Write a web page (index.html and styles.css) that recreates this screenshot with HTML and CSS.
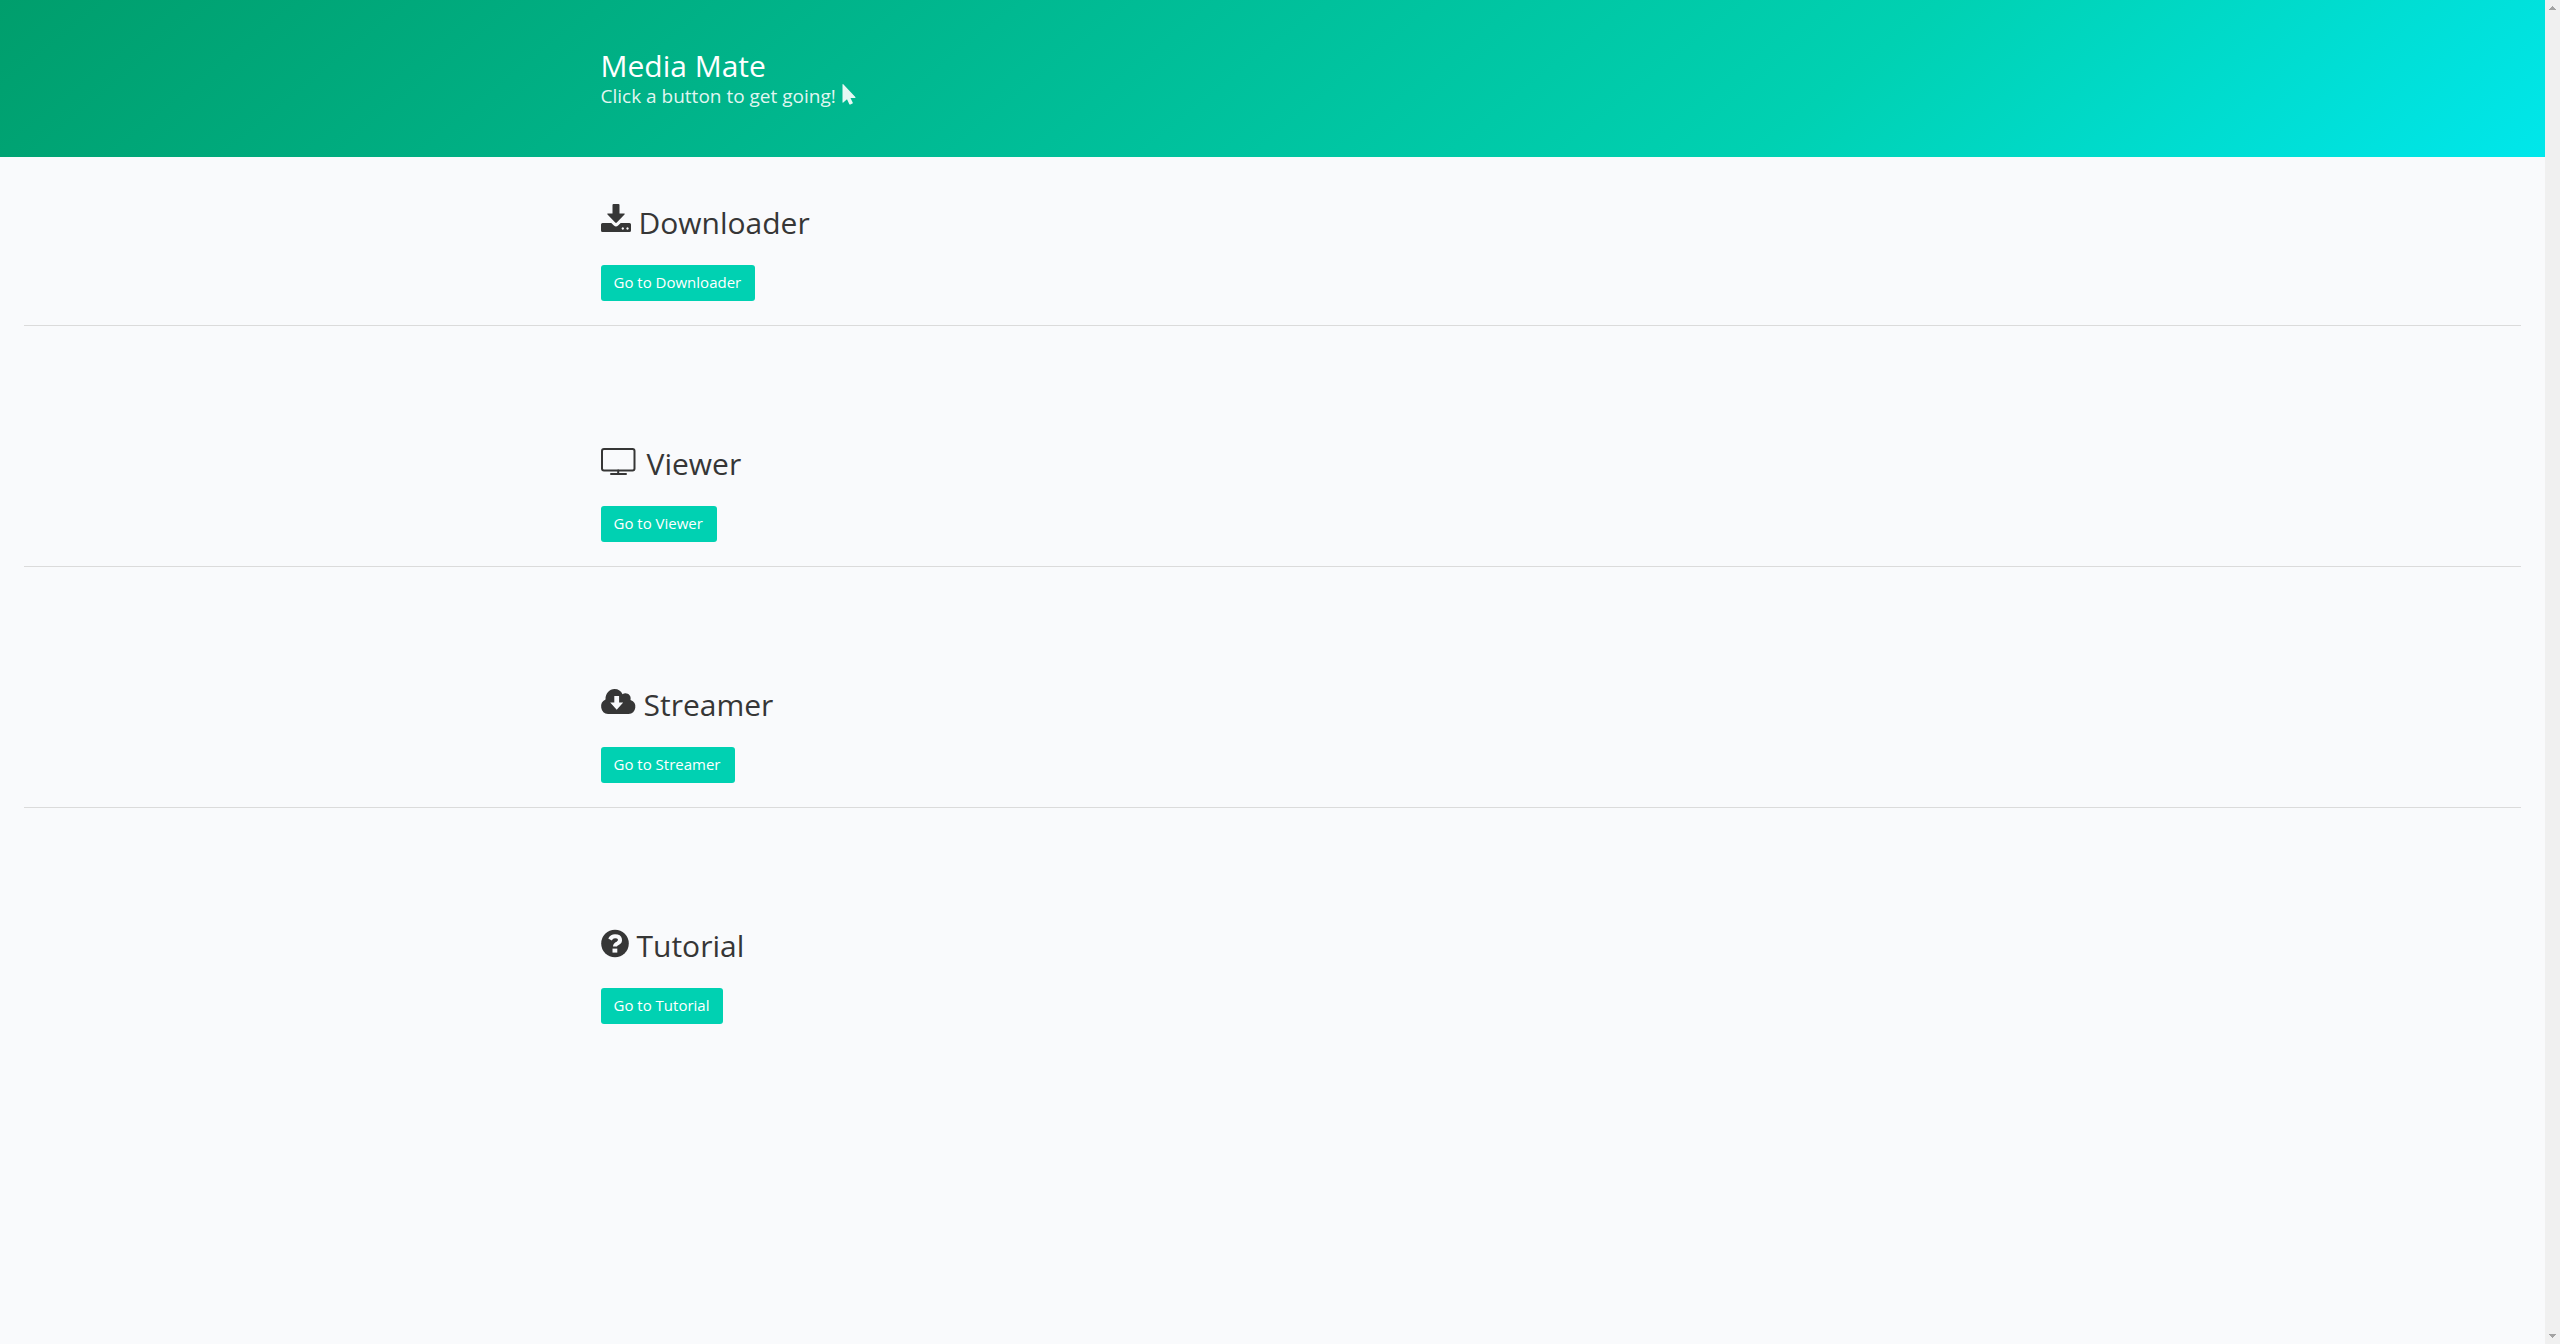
FILE: index.html
```
<!DOCTYPE html>
<html lang="en">
<head>
<meta charset="utf-8">
<meta name="viewport" content="width=device-width, initial-scale=1">
<title>Media Mate</title>
<link rel="stylesheet" href="styles.css">
</head>
<body>
<div class="page">
  <header class="hero">
    <div class="container">
      <h1 class="title">Media Mate</h1>
      <p class="subtitle">
        <span>Click a button to get going!</span>
        <svg class="pointer" viewBox="0 0 14 21" aria-hidden="true"><path d="M.5.5v17.600q0 1 .8.300l3.700-3.200 2.200 4.700q.4.900 1.300.5l1.800-.8q.8-.4.4-1.200l-2.200-4.500h4.500q.9 0 .3-.8L1.300.3Q.5-.3.500.5z"/></svg>
      </p>
    </div>
  </header>
  <main>
    <section class="section">
      <div class="container">
        <h2 class="title">
          <svg class="icon" width="29" height="36" viewBox="0 0 29 36" aria-hidden="true"><path d="M12.500-1h5q1 0 1 1v8.500h4.500q1.500 0 .5 1.100l-7.700 8q-.8.800-1.600 0l-7.700-8q-1-1.100.5-1.100h4.500V0q0-1 1-1z"/><path fill-rule="evenodd" d="M1.500 18h8.800l2.600 2.500q2.100 1.900 4.200 0l2.600-2.500h8.800q1.500 0 1.500 1.500v6q0 1.500-1.500 1.500h-27Q0 27 0 25.500v-6Q0 18 1.500 18zM21.800 22.300a1.200 1.200 0 1 0 .01 0zM26.500 22.300a1.200 1.200 0 1 0 .01 0z"/></svg>
          <span>Downloader</span>
        </h2>
        <button class="button" type="button">Go to Downloader</button>
      </div>
      <hr class="divider">
    </section>
    <section class="section">
      <div class="container">
        <h2 class="title">
          <svg class="icon" width="37" height="36" viewBox="0 0 37 36" aria-hidden="true"><rect class="line" x="1" y="3" width="32.500" height="21.500" rx="2"/><path class="line" d="M17.200 24.500v3.500M10 28h15" stroke-linecap="round"/></svg>
          <span>Viewer</span>
        </h2>
        <button class="button" type="button">Go to Viewer</button>
      </div>
      <hr class="divider">
    </section>
    <section class="section">
      <div class="container">
        <h2 class="title">
          <svg class="icon" width="34" height="36" viewBox="0 0 34 36" aria-hidden="true"><path fill-rule="evenodd" d="M7 27a7.700 7.700 0 0 1-2.500-14.600C4.300 6.500 8.500 2 13.500 2c3.800 0 6.700 2 8 5.200 4-2.500 9.300.8 8 5.800A7.200 7.200 0 0 1 27.500 27zM13.300 9v6.500H9.200l6.500 7.200 6.500-7.200h-4.100V9z"/></svg>
          <span>Streamer</span>
        </h2>
        <button class="button" type="button">Go to Streamer</button>
      </div>
      <hr class="divider">
    </section>
    <section class="section">
      <div class="container">
        <h2 class="title">
          <svg class="icon" width="27" height="36" viewBox="0 0 27 36" aria-hidden="true"><circle cx="14" cy="15.500" r="13.800"/><path class="mark" d="M9 11.500q1.800-3.200 5-3.200c6.200 0 6 5.300 2.800 7-2 1-2.800 1.500-2.800 3.200"/><path class="cut" d="M11.500 20.600h4.800v4h-4.800z"/></svg>
          <span>Tutorial</span>
        </h2>
        <button class="button" type="button">Go to Tutorial</button>
      </div>
    </section>
  </main>
</div>
<div class="scrollbar" aria-hidden="true">
  <svg width="7" height="4" viewBox="0 0 7 4"><path d="M0 4V3h1V2h1V1h1V0h1v1h1v1h1v1h1v1z"/></svg>
  <svg width="7" height="4" viewBox="0 0 7 4"><path d="M0 0v1h1v1h1v1h1v1h1V3h1V2h1V1h1V0z"/></svg>
</div>
</body>
</html>
```
FILE: styles.css
```
* { box-sizing: border-box; }
body {
  margin: 0;
  min-height: 100vh;
  display: flex;
  background: #f9fafc;
  color: #363636;
  font-family: "Open Sans", "Noto Sans", sans-serif;
  font-size: 15px;
}
.page { flex: 1; min-width: 0; }
.container { max-width: 1344px; margin: 0 auto; }

.hero {
  padding: 48px 24px;
  color: #fff;
  background: linear-gradient(141deg, #009e6c 0%, #00d1b2 71%, #00e7eb 100%);
}
.title {
  display: flex;
  gap: 9px;
  margin: 0;
  font-size: 30px;
  font-weight: 400;
  line-height: 36px;
}
.subtitle {
  display: flex;
  gap: 6px;
  margin: 0;
  font-size: 19px;
  line-height: 25px;
  color: rgba(255, 255, 255, 0.9);
}
.pointer { width: 14px; height: 21px; fill: currentColor; }

.section { padding: 48px 24px; }
.section .title { margin-bottom: 24px; }
.icon { flex: none; overflow: visible; fill: #363636; }
.line { fill: none; stroke: #363636; stroke-width: 2; }
.mark { fill: none; stroke: #f9fafc; stroke-width: 4; }
.cut { fill: #f9fafc; }

.button {
  display: block;
  height: 36px;
  padding: 0 14px 2px 13px;
  border: 0;
  border-radius: 3px;
  background: #00d1b2;
  color: #fff;
  font: inherit;
  line-height: 34px;
  cursor: pointer;
}
.divider {
  height: 1px;
  margin: 24px 0;
  border: 0;
  background: #dbdbdb;
}

.scrollbar {
  position: sticky;
  top: 0;
  flex: none;
  display: flex;
  flex-direction: column;
  justify-content: space-between;
  align-items: center;
  width: 15px;
  height: 100vh;
  padding: 6px 0;
  background: #f0f0f0;
  fill: #a3a3a3;
}
```
